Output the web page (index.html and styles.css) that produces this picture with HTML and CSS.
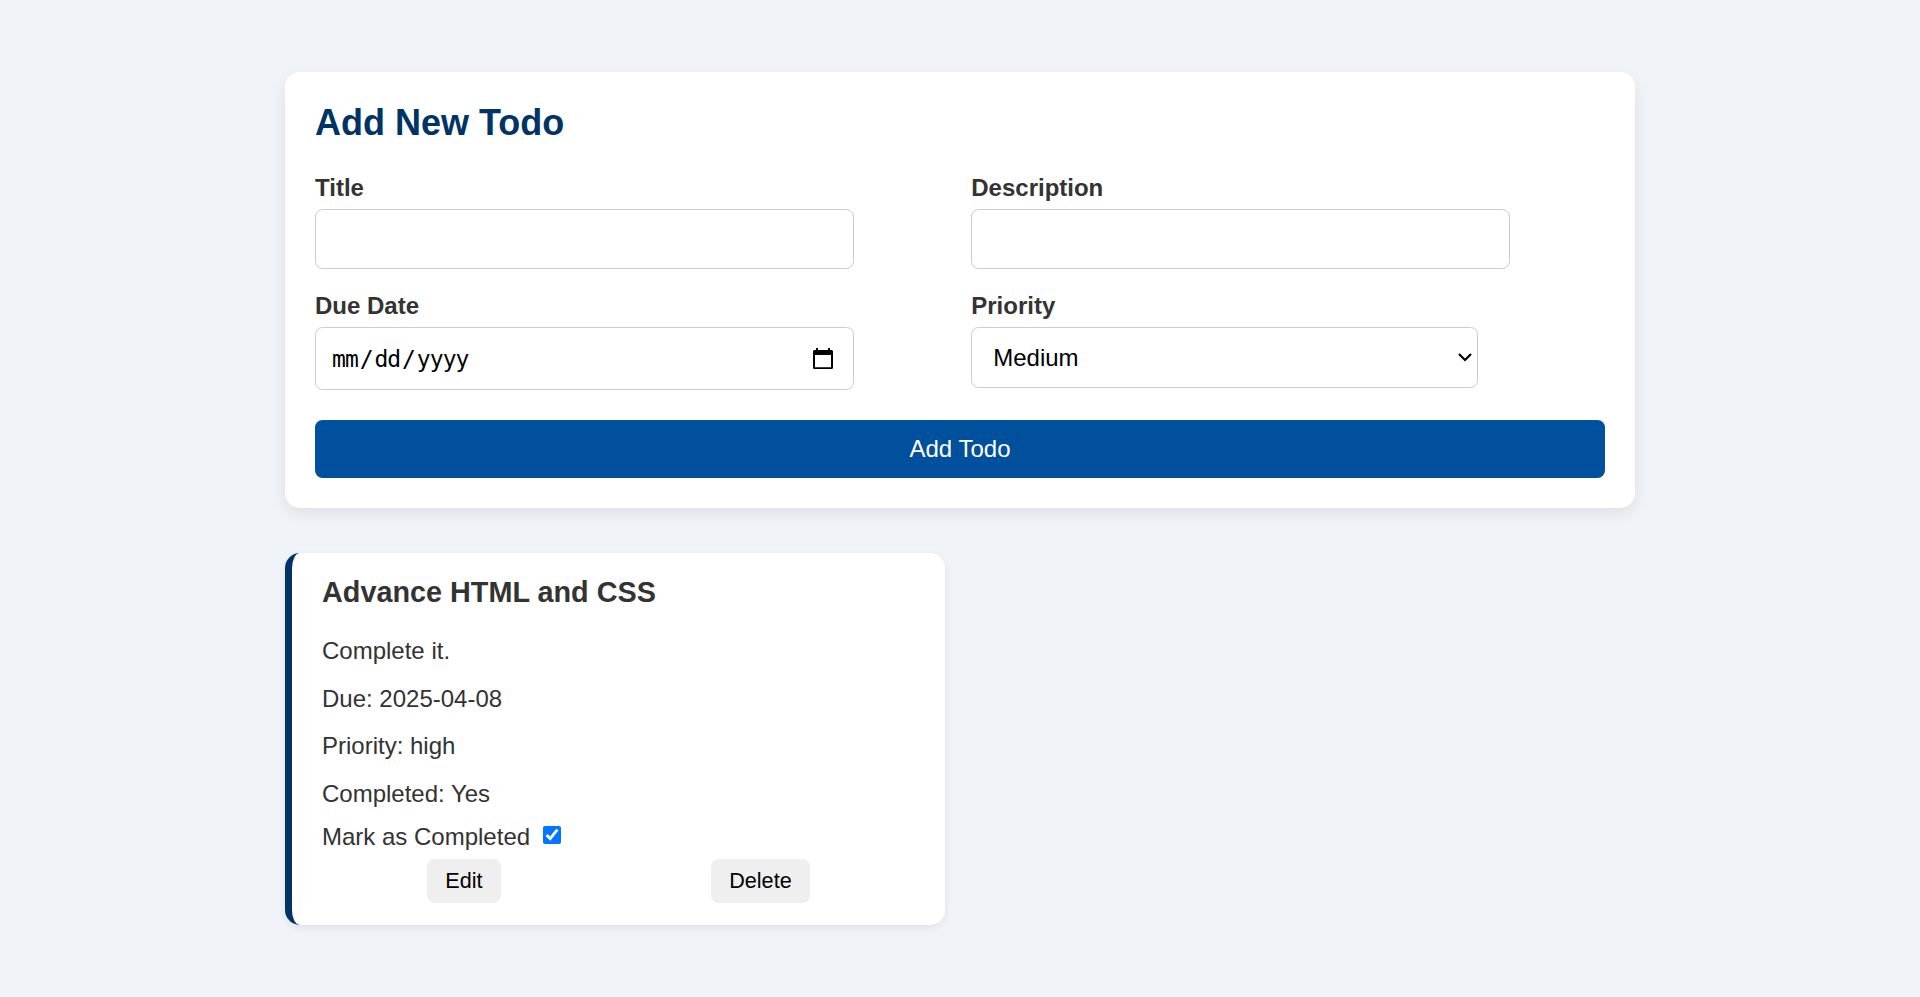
FILE: index.html
```html
<!DOCTYPE html>
<html lang="en">
<head>
<meta charset="utf-8">
<title>Todo List</title>
<link rel="stylesheet" href="styles.css">
</head>
<body>
<main class="container">
  <form class="todo-form">
    <h2 class="form-title">Add New Todo</h2>
    <div class="form-grid">
      <div class="form-group">
        <label class="label" for="title">Title</label>
        <input class="control" type="text" id="title">
      </div>
      <div class="form-group">
        <label class="label" for="description">Description</label>
        <input class="control" type="text" id="description">
      </div>
      <div class="form-group">
        <label class="label" for="due">Due Date</label>
        <div class="control date-control" id="due">
          <span class="date-text">mm<span class="slash">/</span>dd<span class="slash">/</span>yyyy</span>
          <svg class="calendar-icon" width="20" height="21" viewBox="0 0 20 21"><path fill="#000" fill-rule="evenodd" d="M3 0h2v2h10V0h2v2h1.500A1.500 1.500 0 0 1 20 3.500V19.500A1.500 1.500 0 0 1 18.500 21H1.500A1.500 1.500 0 0 1 0 19.500V3.500A1.500 1.500 0 0 1 1.500 2H3zM2 7v12.300h16V7z"/></svg>
        </div>
      </div>
      <div class="form-group">
        <label class="label" for="priority">Priority</label>
        <div class="select-wrap">
          <select class="select" id="priority">
            <option>Low</option>
            <option selected>Medium</option>
            <option>High</option>
          </select>
          <svg class="chevron" width="14" height="9" viewBox="0 0 14 9"><path d="M1 1l6 6 6-6" fill="none" stroke="#000" stroke-width="2.200"/></svg>
        </div>
      </div>
    </div>
    <button class="submit" type="button">Add Todo</button>
  </form>
  <section class="todo-list">
    <article class="todo-card">
      <h3 class="todo-title">Advance HTML and CSS</h3>
      <div class="todo-details">
        <p class="detail">Complete it.</p>
        <p class="detail">Due: 2025-04-08</p>
        <p class="detail">Priority: high</p>
        <p class="detail">Completed: Yes</p>
      </div>
      <label class="mark">Mark as Completed <input class="checkbox" type="checkbox" checked></label>
      <div class="actions">
        <button class="action" type="button">Edit</button>
        <button class="action" type="button">Delete</button>
      </div>
    </article>
  </section>
</main>
</body>
</html>
```
FILE: styles.css
```css
* { box-sizing: border-box; }
body {
  margin: 0;
  min-height: 997px;
  background: #f0f4f8;
  color: #333;
  font: 24px/27px "Liberation Sans", Arial, sans-serif;
}
.container { width: 1350px; margin: 0 auto; padding-top: 72px; }
.todo-form {
  padding: 30px;
  background: #fff;
  border-radius: 15px;
  box-shadow: 0 6px 18px rgba(0, 0, 0, .08);
}
.form-title { margin: 0 0 31px; color: #003366; font-size: 36px; line-height: 41px; }
.form-grid { display: grid; grid-template-columns: 1fr 1fr; gap: 23px 22.5px; align-items: start; }
.label { display: block; margin-bottom: 8px; font-weight: bold; }
.control {
  display: block;
  width: 539px;
  height: 60px;
  padding: 0 15px;
  border: 1px solid #ccc;
  border-radius: 7.5px;
  background: #fff;
  color: #000;
}
.date-control { display: flex; align-items: center; justify-content: space-between; height: 63px; padding-right: 20px; }
.date-text { padding: 2px 0 0 1px; font: 23px/27px "DejaVu Sans Mono", monospace; letter-spacing: -.04em; }
.slash { margin: 0 1.8px; }
.select-wrap { position: relative; width: 507px; }
.select {
  display: block;
  width: 100%;
  height: 61px;
  padding: 0 21px;
  border: 1px solid #ccc;
  border-radius: 7.5px;
  background: #fff;
  color: #000;
  font: inherit;
  appearance: none;
}
.chevron { position: absolute; right: 6px; top: 26px; }
.submit {
  display: block;
  width: 100%;
  height: 58px;
  margin-top: 30px;
  padding: 0 0 2px;
  border: 0;
  border-radius: 7.5px;
  background: #00509e;
  color: #fff;
  font: inherit;
}
.todo-list { display: grid; grid-template-columns: 660px; margin-top: 45px; }
.todo-card {
  height: 372px;
  padding: 22px 30px;
  border-left: 7px solid #003366;
  border-radius: 15px;
  background: #fff;
  box-shadow: 0 3px 9px rgba(0, 0, 0, .07);
}
.todo-title { margin: 0 0 28px; font-size: 28.8px; line-height: 34px; }
.todo-details { display: grid; gap: 20.6px; }
.detail { margin: 0; }
.mark { display: flex; align-items: center; gap: 13px; margin-top: 16px; }
.checkbox { width: 18px; height: 18px; margin: 0 0 3px; }
.actions { display: flex; justify-content: space-around; margin-top: 9px; }
.action {
  height: 44px;
  padding: 0 18px;
  border: 0;
  border-radius: 7.5px;
  background: #efefef;
  color: #000;
  font: 21.6px/25px "Liberation Sans", Arial, sans-serif;
}
```
